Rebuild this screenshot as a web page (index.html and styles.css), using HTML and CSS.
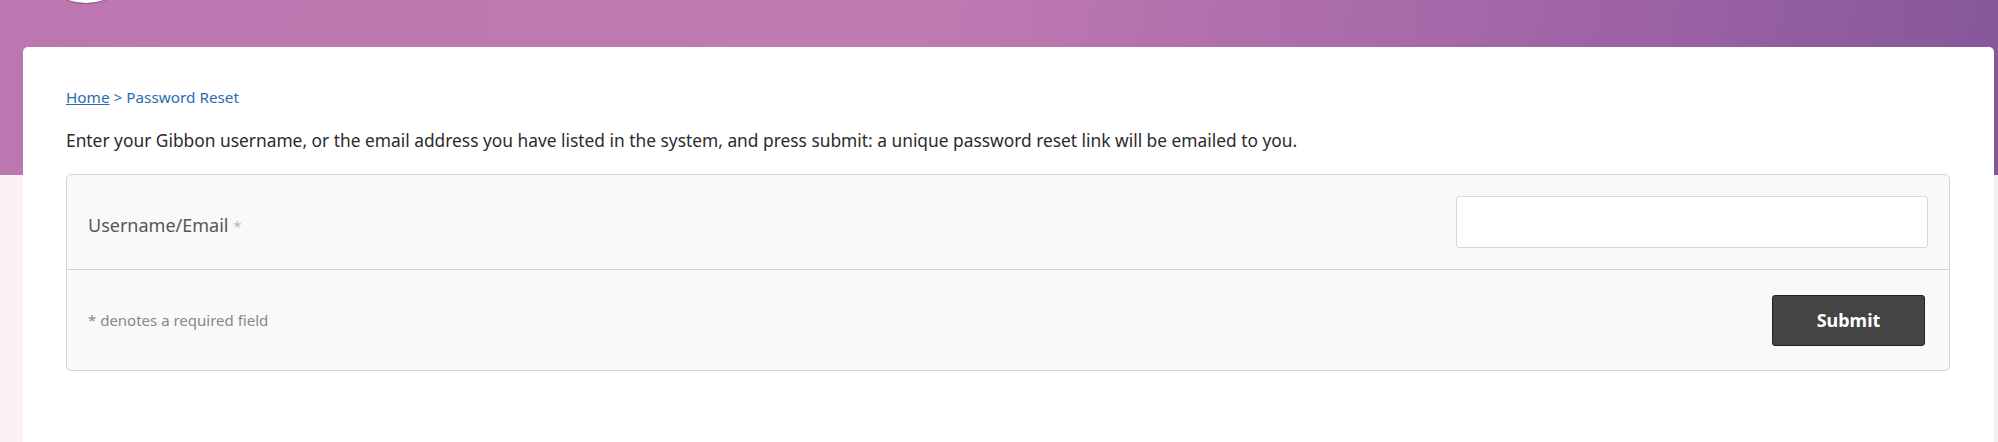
FILE: index.html
```html
<!DOCTYPE html>
<html lang="en">
<head>
<meta charset="utf-8">
<title>Password Reset</title>
<link rel="stylesheet" href="styles.css">
</head>
<body>
<div class="page">
  <header class="header">
    <div class="logo"></div>
  </header>
  <main class="card">
    <nav class="breadcrumb"><a href="#" class="crumb-link">Home</a> &gt; Password Reset</nav>
    <p class="intro">Enter your Gibbon username, or the email address you have listed in the system, and press submit: a unique password reset link will be emailed to you.</p>
    <form class="form">
      <div class="row row-field">
        <label class="label" for="email">Username/Email <span class="req">*</span></label>
        <input class="input" id="email" type="text">
      </div>
      <div class="row row-submit">
        <span class="note">* denotes a required field</span>
        <button class="button" type="button">Submit</button>
      </div>
    </form>
  </main>
</div>
</body>
</html>
```
FILE: styles.css
```css
html, body {
  margin: 0;
  padding: 0;
  height: 100%;
  overflow: hidden;
}
body {
  font-family: "Noto Sans", "Open Sans", sans-serif;
  color: #333;
  background: linear-gradient(100deg, #bd77b0 0%, #c07bb2 45%, #a064a6 78%, #84579a 100%) top left / 100% 175px no-repeat,
              linear-gradient(90deg, #faf1f7 0%, #f5eff5 60%, #f0eef4 100%);
}
.page {
  display: flex;
  flex-direction: column;
  height: 100%;
}
.header {
  height: 47px;
  flex: none;
}
.logo {
  width: 110px;
  height: 110px;
  margin: -107px 0 0 31px;
  border-radius: 50%;
  background: #fff;
  box-shadow: 0 1px 1px rgba(0,0,0,0.25);
}
.card {
  flex: 1;
  margin: 0 4px 0 23px;
  background: #fff;
  border-radius: 5px 5px 0 0;
  padding: 40px 44px 0 43px;
}
.breadcrumb {
  font-size: 15.3px;
  line-height: 20px;
  color: #2c6bb1;
}
.crumb-link {
  color: #2c6bb1;
  text-decoration: underline;
}
.intro {
  margin: 21px 0 0;
  font-size: 17.35px;
  line-height: 24px;
  color: #2b2b2b;
}
.form {
  margin-top: 22px;
  background: #f9f9f9;
  border: 1px solid #d4d4d4;
  border-radius: 5px;
}
.row {
  display: flex;
  align-items: center;
  justify-content: space-between;
  padding: 0 21px;
}
.row-field {
  height: 94px;
  border-bottom: 1px solid #d4d4d4;
}
.row-submit {
  height: 100px;
}
.label {
  font-size: 18px;
  color: #555;
  padding-top: 6px;
}
.req {
  color: #bbb;
  font-size: 15px;
}
.input {
  box-sizing: border-box;
  width: 472px;
  height: 52px;
  border: 1px solid #d6d6d6;
  border-radius: 3px;
  background: #fff;
  margin: 0;
}
.note {
  font-size: 15px;
  color: #888;
}
.button {
  box-sizing: border-box;
  width: 153px;
  height: 51px;
  margin-right: 3px;
  background: #444;
  border: 1px solid #222;
  border-radius: 3px;
  color: #fff;
  font-family: inherit;
  font-size: 18px;
  font-weight: bold;
}
```
